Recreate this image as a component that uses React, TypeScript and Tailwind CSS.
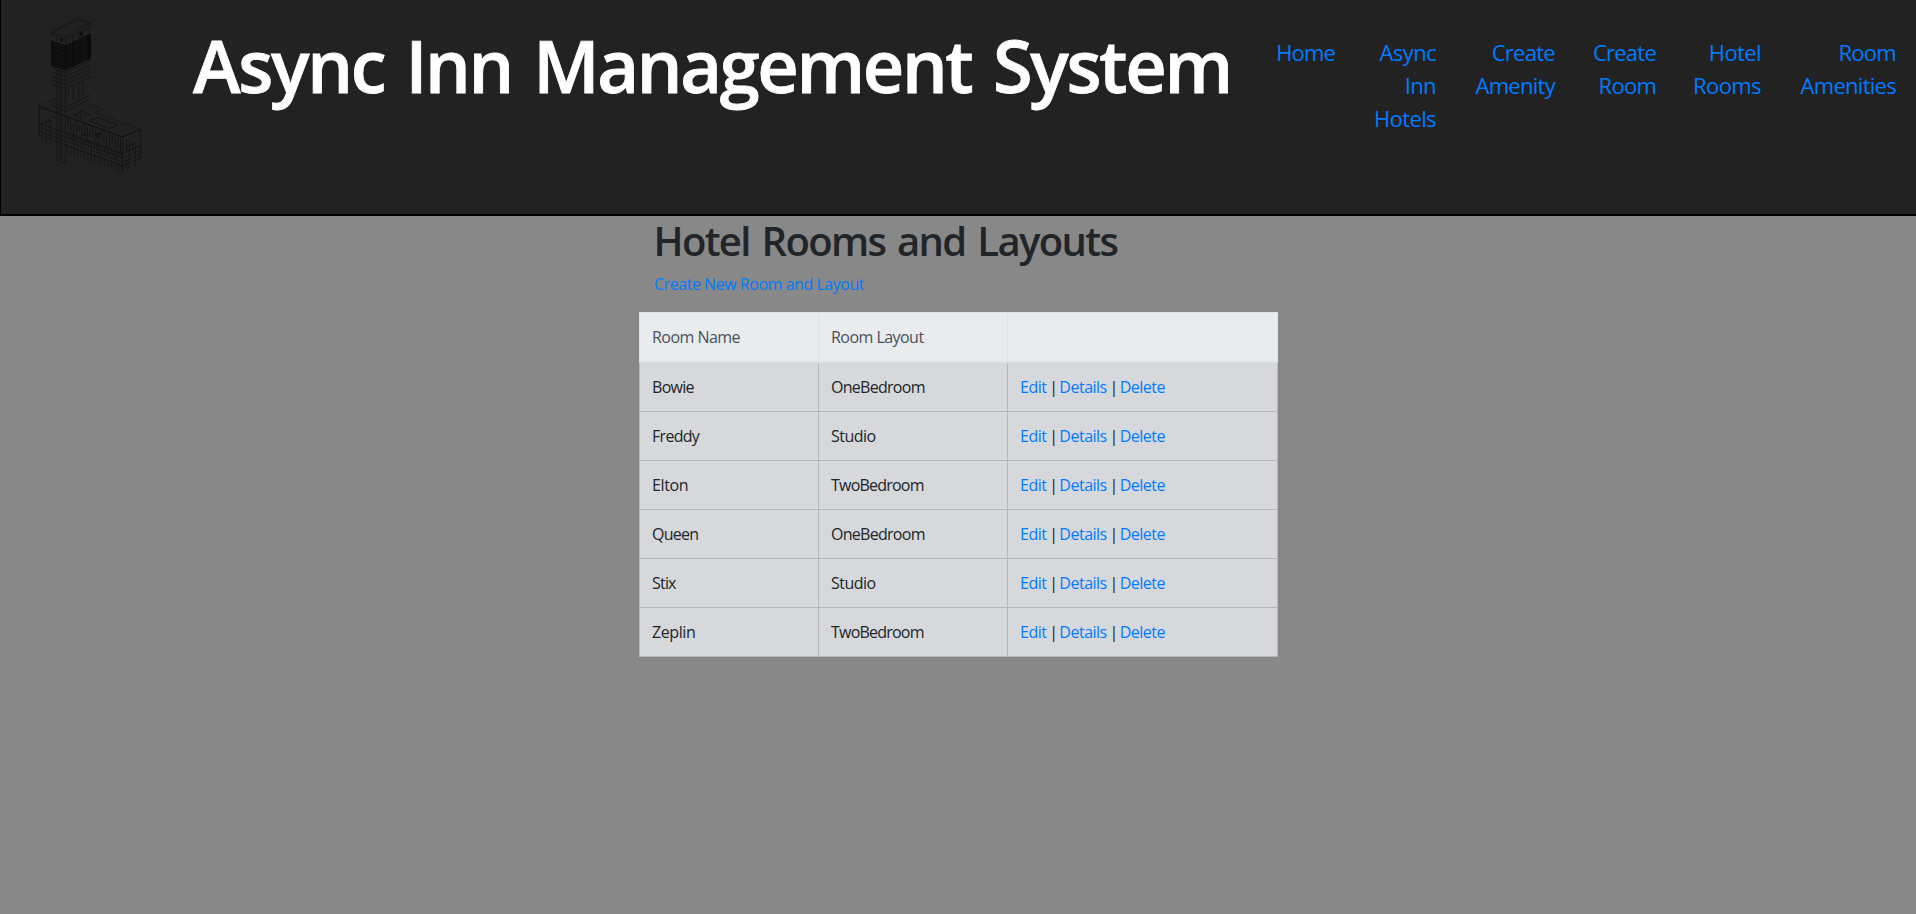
import React from 'react';

type NavItem = { label: string; className: string };
type Room = { name: string; nameTracking: string; layout: string; layoutTracking: string };

const navItems: NavItem[] = [
  { label: 'Home', className: 'w-[101px] tracking-[-0.85px]' },
  { label: 'Async Inn Hotels', className: 'w-[101px] tracking-[-0.6px]' },
  { label: 'Create Amenity', className: 'w-[119px] tracking-[-0.72px]' },
  { label: 'Create Room', className: 'w-[101px] tracking-[-0.75px]' },
  { label: 'Hotel Rooms', className: 'w-[105px] tracking-[-0.6px]' },
  { label: 'Room Amenities', className: 'w-[135px] tracking-[-0.72px]' },
];

const rooms: Room[] = [
  { name: 'Bowie', nameTracking: 'tracking-[-0.7px]', layout: 'OneBedroom', layoutTracking: 'tracking-[-0.72px]' },
  { name: 'Freddy', nameTracking: 'tracking-[-0.7px]', layout: 'Studio', layoutTracking: 'tracking-[-0.5px]' },
  { name: 'Elton', nameTracking: 'tracking-[-0.36px]', layout: 'TwoBedroom', layoutTracking: 'tracking-[-0.78px]' },
  { name: 'Queen', nameTracking: 'tracking-[-0.75px]', layout: 'OneBedroom', layoutTracking: 'tracking-[-0.72px]' },
  { name: 'Stix', nameTracking: 'tracking-[-0.8px]', layout: 'Studio', layoutTracking: 'tracking-[-0.5px]' },
  { name: 'Zeplin', nameTracking: 'tracking-[-0.4px]', layout: 'TwoBedroom', layoutTracking: 'tracking-[-0.78px]' },
];

const range = (n: number) => Array.from({ length: n }, (_, i) => i);

function HotelDrawing() {
  return (
    <svg className="block h-[180px] w-[160px]" viewBox="3 0 480 540" fill="none" stroke="#0c0c0c" strokeWidth="1.6">
      {/* roof slab and plant room */}
      <path d="M155 97 232 54 272 70 198 110Z M155 97V104L198 118 272 79V70" />
      <path d="M166 96 233 60 262 71 240 83" strokeDasharray="7 3" />
      <path d="M170 110V124M183 113V126M197 118V210M220 106V126M236 98V118M246 93V112M264 102V84" />
      <path d="M180 117H187V123H180Z M241 98H248V106H241Z" fill="#0c0c0c" />
      {/* enclosed floors */}
      <path d="M155 122 197 137 240 118 272 100V175L197 210 155 196Z" fill="#141414" stroke="none" />
      {range(10).map((i) => (
        <path
          key={i}
          strokeWidth="3"
          stroke="#060606"
          strokeDasharray={i % 2 ? '6 2' : '9 2'}
          d={`M155 ${124 + i * 8}L197 ${138 + i * 8} 272 ${102 + i * 8}`}
        />
      ))}
      <path
        d="M155 122V196M197 136V210M220 127V200M240 117V190M265 104V180M271 100V178"
        stroke="#060606"
        strokeWidth="2"
      />
      {/* open floors */}
      {range(5).map((i) => (
        <path key={i} d={`M155 ${204 + i * 12}L197 ${218 + i * 12} 272 ${181 + i * 12}`} />
      ))}
      {/* tower columns */}
      <path stroke="#101010" strokeWidth="2" d="M169 198V480M178 210V482M184 204V487M196 210V488M168 480H178M184 487H196" />
      <path stroke="#101010" strokeWidth="2" d="M205 262V293M220 256V300M236 248V294M248 242V285" />
      <path d="M155 304 197 323 272 284M155 316 197 335 272 296" />
      {/* podium roof and openings */}
      <path stroke="#080808" strokeWidth="2.6" d="M118 320 368 411 422 388" />
      <path strokeDasharray="12 3" d="M118 320 166 294M272 313 304 328 287 338 422 388" />
      <path
        d="M220 346 243 334 272 345M220 346 247 357M233 341V350M243 334V352M256 340V354M268 362 292 352 352 374 328 386Z"
        strokeWidth="2"
      />
      <path d="M118 320V407M422 388V476M368 411V515" />
      <path d="M118 374 165 346" strokeDasharray="10 4" />
      {/* podium floors */}
      {range(4).map((i) => (
        <path key={i} d={`M118 ${370 + i * 12}L368 ${462 + i * 12} 422 ${437 + i * 12}`} />
      ))}
      {/* facade mullions and piles */}
      {range(20).map((i) => (
        <path
          key={i}
          strokeWidth="2"
          stroke="#0e0e0e"
          d={`M${204 + i * 8.3} ${354 + i * 3 + (i % 3) * 5}v${24 + (i % 4) * 7}M${208 + i * 8.3} ${398 + i * 3}v${18 + (i % 3) * 6}`}
        />
      ))}
      {range(17).map((i) => (
        <path key={i} stroke="#0e0e0e" d={`M${202 + i * 10.2} ${434 + i * 3.5}v${24 + (i % 2) * 4}`} />
      ))}
      <path
        stroke="#0e0e0e"
        d="M127 366V427M139 362V430M151 360V434M127 372 151 362M380 416V455M380 480V510M388 420V508M398 425V448M406 430V500M374 440 414 428M374 452 418 442"
      />
      <path d="M248 407 262 402M284 406 304 400M290 412 298 402" strokeWidth="3" />
    </svg>
  );
}

function Separator() {
  return <span className="tracking-[-1.4px] text-[#212529]"> | </span>;
}

export default function App() {
  return (
    <div className="min-h-screen bg-[#888888] font-['Open_Sans','Noto_Sans',sans-serif] text-base leading-6 text-[#212529]">
      <header className="flex h-[216px] items-start border-b-2 border-l border-black bg-[#222222]">
        <div className="w-[192px] shrink-0">
          <HotelDrawing />
        </div>
        <h1 className="shrink-0 pt-[22px] text-[72px] leading-[86px] font-semibold tracking-[-2.32px] whitespace-nowrap text-white [-webkit-text-stroke:0.8px_white] [word-spacing:5px]">
          Async Inn Management System
        </h1>
        <nav className="ml-auto pt-9 pr-5">
          <ul className="flex text-right text-[22px] leading-[33px] text-[#007bff]">
            {navItems.map((item) => (
              <li key={item.label} className={`${item.className} shrink-0 pl-[37px]`}>
                <a href="#">{item.label}</a>
              </li>
            ))}
          </ul>
        </nav>
      </header>

      <main className="mx-auto w-[639px]">
        <div className="px-[15px]">
          <h2 className="mb-[7px] pt-px text-[40px] leading-[48px] font-semibold tracking-[-1.65px] [word-spacing:3px]">
            Hotel Rooms and Layouts
          </h2>
          <p className="mb-4 pl-[0.5px] tracking-[-0.46px]">
            <a href="#" className="text-[#007bff]">
              Create New Room and Layout
            </a>
          </p>
        </div>
        <table className="w-full table-fixed border-collapse text-left">
          <colgroup>
            <col className="w-[179px]" />
            <col className="w-[189px]" />
            <col />
          </colgroup>
          <thead>
            <tr className="bg-[#e9ecef] text-[#495057]">
              <th className="border border-b-2 border-[#dee2e6] p-3 pl-[12.5px] font-normal tracking-[-0.53px]">Room Name</th>
              <th className="border border-b-2 border-[#dee2e6] p-3 pl-[12.5px] font-normal tracking-[-0.54px]">Room Layout</th>
              <th className="border border-b-2 border-[#dee2e6] p-3" />
            </tr>
          </thead>
          <tbody>
            {rooms.map((room) => (
              <tr key={room.name} className="bg-[#d6d8db]">
                <td className={`border border-[#b3b7bb] p-3 pl-[12.5px] ${room.nameTracking}`}>{room.name}</td>
                <td className={`border border-[#b3b7bb] p-3 pl-[12.5px] ${room.layoutTracking}`}>{room.layout}</td>
                <td className="border border-[#b3b7bb] p-3 pl-[12.5px] tracking-[-0.5px] text-[#007bff]">
                  <a href="#">Edit</a>
                  <Separator />
                  <a href="#">Details</a>
                  <Separator />
                  <a href="#">Delete</a>
                </td>
              </tr>
            ))}
          </tbody>
        </table>
      </main>
    </div>
  );
}
